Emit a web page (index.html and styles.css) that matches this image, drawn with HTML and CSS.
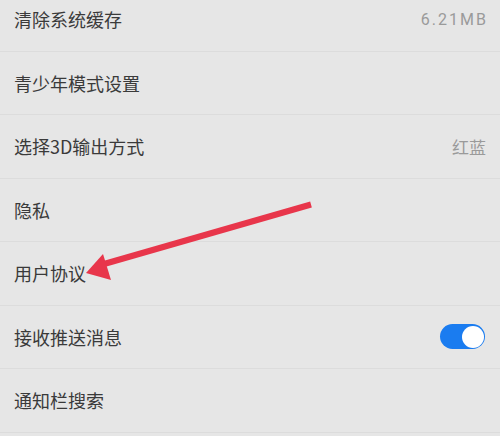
FILE: index.html
```html
<!DOCTYPE html>
<html lang="zh-CN">
<head>
  <meta charset="UTF-8" />
  <meta name="viewport" content="width=device-width, initial-scale=1.0"/>
  <title>设置</title>
  <link rel="stylesheet" href="styles.css">
</head>
<body>
  <div class="settings">
    <div class="row">
      <span class="label">清除系统缓存</span>
      <span class="value num">6.21MB</span>
    </div>
    <div class="row">
      <span class="label">青少年模式设置</span>
    </div>
    <div class="row">
      <span class="label">选择3D输出方式</span>
      <span class="value">红蓝</span>
    </div>
    <div class="row">
      <span class="label">隐私</span>
    </div>
    <div class="row">
      <span class="label">用户协议</span>
    </div>
    <div class="row">
      <span class="label">接收推送消息</span>
      <span class="toggle on"><span class="knob"></span></span>
    </div>
    <div class="row">
      <span class="label">通知栏搜索</span>
    </div>
  </div>

  <!-- annotation arrow drawn over the list -->
  <svg class="arrow" width="500" height="436" viewBox="0 0 500 436">
    <line x1="311" y1="204.5" x2="104" y2="264" stroke="#e8364b" stroke-width="6" stroke-linecap="butt"/>
    <polygon points="86,273 103,254 111,280" fill="#e8364b"/>
  </svg>
</body>
</html>
```

FILE: styles.css
```css
* {
  box-sizing: border-box;
  margin: 0;
  padding: 0;
}

body {
  width: 500px;
  height: 436px;
  overflow: hidden;
  background: #e6e6e6;
  font-family: "Noto Sans CJK SC", "Noto Sans", sans-serif;
  position: relative;
}

.settings {
  margin-top: -12px;
}

.row {
  height: 63.5px;
  display: flex;
  align-items: center;
  justify-content: space-between;
  padding: 0 14px;
  border-bottom: 1px solid #dcdcdc;
}

.label {
  font-size: 18px;
  color: #3a3a3a;
}

.value {
  font-size: 17px;
  color: #9a9a9a;
}

.value.num {
  font-family: Roboto, "Noto Sans", sans-serif;
  font-size: 16px;
  letter-spacing: 2px;
  margin-right: -2px;
}

.toggle {
  width: 45px;
  height: 25px;
  border-radius: 13px;
  background: #1a7cf0;
  display: flex;
  align-items: center;
  justify-content: flex-end;
  padding: 0 1.5px;
  margin-right: 1px;
}

.knob {
  width: 22px;
  height: 22px;
  border-radius: 50%;
  background: #fff;
}

.arrow {
  position: absolute;
  top: 0;
  left: 0;
}
```
